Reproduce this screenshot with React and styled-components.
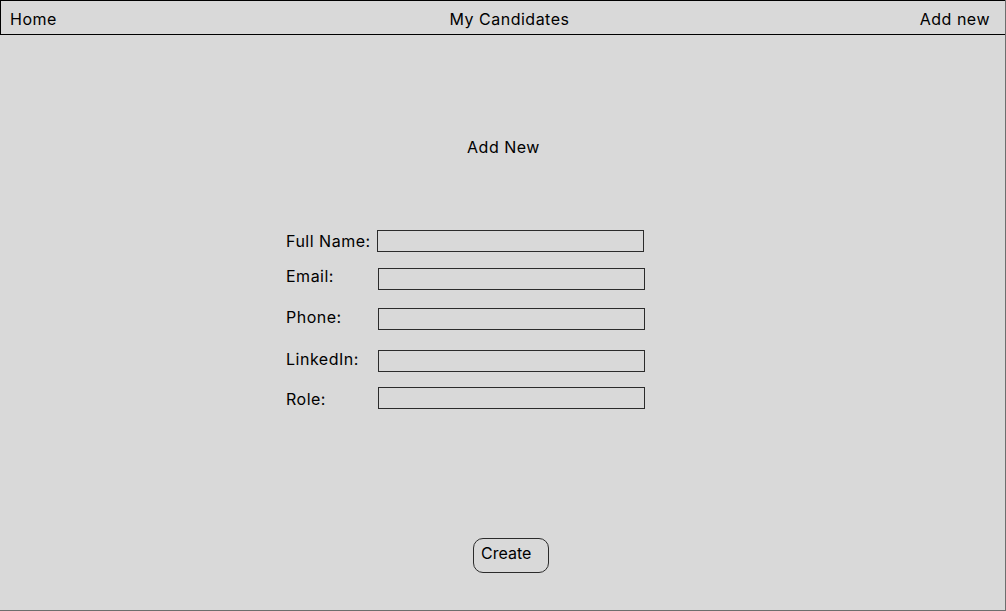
import styled, { createGlobalStyle } from "styled-components";

const GlobalStyle = createGlobalStyle`
  html, body {
    margin: 0;
    padding: 0;
    background: #d9d9d9;
  }
  body {
    font-family: Inter, "Noto Sans", sans-serif;
    font-size: 16px;
    letter-spacing: 0.5px;
    color: #000;
  }
  * {
    box-sizing: border-box;
  }
`;

const Page = styled.div`
  width: 1006px;
  height: 611px;
  background: #d9d9d9;
  border-right: 1px solid #6e6e6e;
  border-bottom: 1px solid #6e6e6e;
  display: flex;
  flex-direction: column;
  overflow: hidden;
`;

const Nav = styled.nav`
  height: 35px;
  border: 1px solid #000;
  margin-right: -1px;
  display: grid;
  grid-template-columns: 1fr auto 1fr;
  align-items: center;
  padding: 2px 15px 0 9px;
`;

const NavLink = styled.a`
  color: #000;
  text-decoration: none;
  justify-self: ${(p) => p.$align || "start"};
  margin-left: ${(p) => p.$shift || 0}px;
`;

const Main = styled.main`
  display: flex;
  flex-direction: column;
  align-items: flex-start;
`;

const Title = styled.h1`
  align-self: stretch;
  margin: 103px 0 0;
  padding-left: 2px;
  font-size: 16px;
  font-weight: 400;
  text-align: center;
  line-height: 19px;
`;

const Form = styled.form`
  display: flex;
  flex-direction: column;
  padding-left: 286px;
  margin-top: 73px;
`;

const Row = styled.div`
  display: flex;
  align-items: flex-start;
  margin-top: ${(p) => p.$gap}px;
  height: 22px;
`;

const Label = styled.label`
  width: ${(p) => p.$w}px;
  margin-top: ${(p) => p.$dy}px;
  line-height: 19px;
  white-space: nowrap;
`;

const Input = styled.input`
  width: 267px;
  height: 22px;
  margin: 0;
  padding: 0 4px;
  background: #d9d9d9;
  border: 1px solid #2b2b2b;
  border-radius: 0;
  font: inherit;
  outline: none;
`;

const Button = styled.button`
  width: 76px;
  height: 35px;
  margin: 129px 0 0 473px;
  padding: 5px 0 0 7px;
  background: #d9d9d9;
  border: 1px solid #2b2b2b;
  border-radius: 10px;
  font: inherit;
  color: #000;
  text-align: left;
  line-height: 19px;
  align-self: flex-start;
  display: flex;
  align-items: flex-start;
  cursor: pointer;
`;

const fields = [
  { label: "Full Name:", gap: 0, w: 91, dy: 2 },
  { label: "Email:", gap: 16, w: 92, dy: -1 },
  { label: "Phone:", gap: 18, w: 92, dy: 0 },
  { label: "LinkedIn:", gap: 20, w: 92, dy: 0 },
  { label: "Role:", gap: 15, w: 92, dy: 3 },
];

export default function App() {
  return (
    <>
      <GlobalStyle />
      <Page>
        <Nav>
          <NavLink href="#">Home</NavLink>
          <NavLink href="#" $shift={19}>
            My Candidates
          </NavLink>
          <NavLink href="#" $align="end">
            Add new
          </NavLink>
        </Nav>
        <Main>
          <Title>Add New</Title>
          <Form onSubmit={(e) => e.preventDefault()}>
            {fields.map((f) => (
              <Row key={f.label} $gap={f.gap}>
                <Label $w={f.w} $dy={f.dy}>
                  {f.label}
                </Label>
                <Input type="text" />
              </Row>
            ))}
          </Form>
          <Button type="button">Create</Button>
        </Main>
      </Page>
    </>
  );
}
